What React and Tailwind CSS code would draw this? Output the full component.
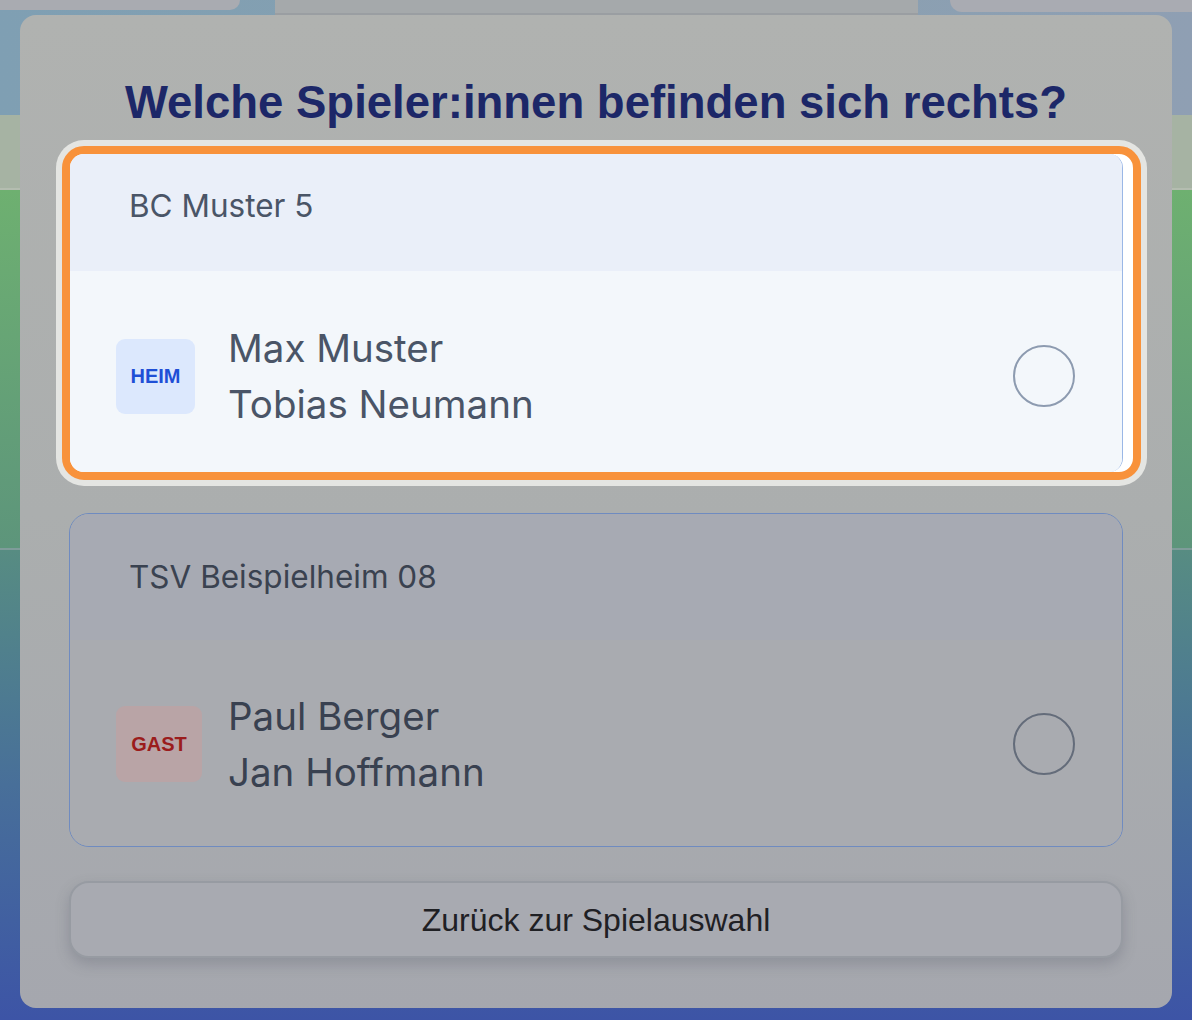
import { useState } from "react";

const teams = [
  {
    id: "home",
    club: "BC Muster 5",
    badge: "HEIM",
    players: ["Max Muster", "Tobias Neumann"],
  },
  {
    id: "guest",
    club: "TSV Beispielheim 08",
    badge: "GAST",
    players: ["Paul Berger", "Jan Hoffmann"],
  },
];

function Radio({ dim }) {
  return (
    <span
      className={`block h-[62px] w-[62px] shrink-0 rounded-full border-2 ${
        dim ? "border-[#646c7a]" : "border-[#8d9bb0]"
      }`}
    />
  );
}

export default function App() {
  const [selected, setSelected] = useState(null);

  return (
    <div className="relative h-[1020px] w-[1192px] overflow-hidden font-['Inter',sans-serif]">
      {/* blurred page behind the dialog */}
      <div className="flex h-full flex-col">
        <div className="flex h-[115px] items-start bg-gradient-to-r from-[#7f9fb3] via-[#87a0b0] to-[#8f9fb3]">
          <div className="h-[10px] w-[240px] rounded-br-[14px] bg-[#a9abb1]" />
          <div className="ml-[35px] h-[15px] w-[643px] border-b-2 border-[#9a9ea2] bg-[#a5a9ab]" />
          <div className="ml-[32px] h-[12px] flex-1 rounded-bl-[14px] bg-[#a9abb2]" />
        </div>
        <div className="h-[75px] border-b-2 border-[#b4bdb0] bg-[#a6b3a3]" />
        <div className="h-[360px] border-b-2 border-[#7f9c9a] bg-gradient-to-b from-[#6eb070] to-[#5d957b]" />
        <div className="flex-1 bg-gradient-to-b from-[#578c82] via-[#486f99] to-[#3d54a6]" />
      </div>

      {/* dialog */}
      <div className="absolute inset-0 flex items-start justify-center pt-[15px]">
        <div className="flex h-[993px] w-[1152px] flex-col rounded-[16px] bg-gradient-to-b from-[#b0b2b0] via-[#abaeae] to-[#a5a7ae] px-[49px] pt-[61px]">
          <h1 className="text-center font-['Liberation_Sans',Arial,sans-serif] text-[45.5px] font-bold leading-[54px] text-[#1c2768]">
            Welche Spieler:innen befinden sich rechts?
          </h1>

          {/* highlighted option */}
          <div className="mt-[10px] ml-[-13px] mr-[-24px] rounded-[28px] bg-[#e4e5e2] p-[6px]">
            <div className="overflow-hidden rounded-[22px] border-8 border-[#f8923b] bg-white">
              <div
                className="mr-[10px] cursor-pointer overflow-hidden rounded-r-[14px] border-r border-[#9ab7e6]"
                onClick={() => setSelected(teams[0].id)}
              >
                <div className="flex h-[117px] items-center bg-[#eaeff9] pb-[14px] pl-[59px] text-[31.5px] text-[#4a5567]">
                  {teams[0].club}
                </div>
                <div className="flex h-[201px] items-center bg-[#f3f7fb] pt-[9px] pl-[46px] pr-[47px]">
                  <div className="w-[112px] shrink-0">
                    <span className="flex h-[75px] w-[79px] items-center justify-center rounded-[9px] bg-[#dce8fd] font-['Liberation_Sans',Arial,sans-serif] text-[20px] font-bold text-[#1f4fd6]">
                      {teams[0].badge}
                    </span>
                  </div>
                  <div className="flex-1 text-[38.5px] leading-[56px] text-[#4a5567]">
                    {teams[0].players.map((p) => (
                      <p key={p}>{p}</p>
                    ))}
                  </div>
                  <Radio />
                </div>
              </div>
            </div>
          </div>

          {/* dimmed option */}
          <div
            className="mt-[27px] cursor-pointer overflow-hidden rounded-[20px] border-[1.5px] border-[#6f8bc0]"
            onClick={() => setSelected(teams[1].id)}
          >
            <div className="flex h-[126px] items-center bg-[#a7aab3] pl-[59px] text-[31.5px] text-[#3a4250]">
              {teams[1].club}
            </div>
            <div className="flex h-[206px] items-center bg-[#a9abb0] pt-[2px] pl-[46px] pr-[47px]">
              <div className="w-[112px] shrink-0">
                <span className="flex h-[76px] w-[86px] items-center justify-center rounded-[9px] bg-[#b9a4a6] font-['Liberation_Sans',Arial,sans-serif] text-[20px] font-bold text-[#9b1c1c]">
                  {teams[1].badge}
                </span>
              </div>
              <div className="flex-1 text-[38.5px] leading-[56px] text-[#394150]">
                {teams[1].players.map((p) => (
                  <p key={p}>{p}</p>
                ))}
              </div>
              <Radio dim />
            </div>
          </div>

          <button className="mt-[34px] h-[77px] rounded-[20px] border-2 border-[#979ba2] bg-[#a8aab1] font-['Liberation_Sans',Arial,sans-serif] text-[32px] text-[#1f2024] shadow-[0_6px_14px_rgba(70,75,90,0.25)]">
            Zurück zur Spielauswahl
          </button>
          {selected && <span className="sr-only">{selected}</span>}
        </div>
      </div>
    </div>
  );
}
